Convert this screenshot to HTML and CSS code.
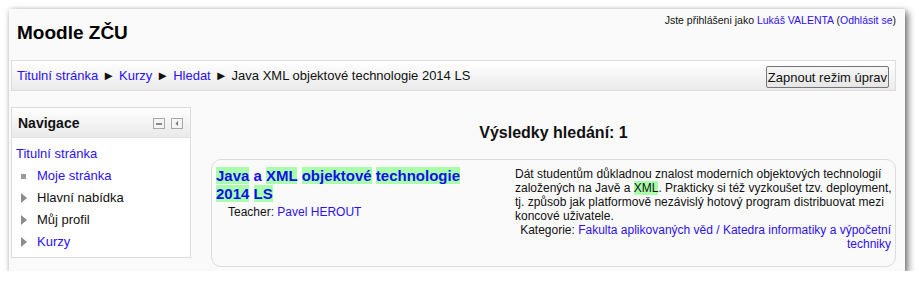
FILE: index.html
```html
<!DOCTYPE html>
<html lang="cs">
<head>
<meta charset="utf-8">
<title>Moodle ZČU</title>
<link rel="stylesheet" href="styles.css">
</head>
<body>
<div class="window">
  <div class="page">
    <div class="header">
      <h1 class="site-name">Moodle ZČU</h1>
      <div class="logininfo">Jste přihlášeni jako <a href="#">Lukáš VALENTA</a> (<a href="#">Odhlásit se</a>)</div>
    </div>
    <div class="navbar">
      <div class="breadcrumb">
        <a href="#">Titulní stránka</a><span class="sep">►</span><a href="#">Kurzy</a><span class="sep">►</span><a href="#">Hledat</a><span class="sep">►</span><span>Java XML objektové technologie 2014 LS</span>
      </div>
      <button class="edit-btn" type="button">Zapnout režim úprav</button>
    </div>
    <div class="content">
      <div class="block">
        <div class="block-header">
          <h2 class="block-title">Navigace</h2>
          <div class="block-icons">
            <svg width="12" height="11" viewBox="0 0 12 11"><rect x="0.5" y="0.5" width="11" height="10" fill="#f4f4f4" stroke="#a8a8a8"/><rect x="3" y="5" width="6" height="2" fill="#8a8a8a"/></svg>
            <svg width="12" height="11" viewBox="0 0 12 11"><rect x="0.5" y="0.5" width="11" height="10" fill="#f4f4f4" stroke="#a8a8a8"/><path d="M7 3 L4.5 5.5 L7 8 Z" fill="#7a7a7a"/></svg>
          </div>
        </div>
        <div class="block-content">
          <a class="nav-top" href="#">Titulní stránka</a>
          <ul class="nav-list">
            <li class="nav-item"><span class="bullet-square"></span><a href="#">Moje stránka</a></li>
            <li class="nav-item"><span class="bullet-tri"></span><span>Hlavní nabídka</span></li>
            <li class="nav-item"><span class="bullet-tri"></span><span>Můj profil</span></li>
            <li class="nav-item"><span class="bullet-tri"></span><a href="#">Kurzy</a></li>
          </ul>
        </div>
      </div>
      <div class="main">
        <h2 class="results">Výsledky hledání: 1</h2>
        <div class="coursebox">
          <div class="info">
            <h3 class="course-name"><a href="#"><span class="hl">Java</span> a <span class="hl">XML</span> <span class="hl">objektové</span> <span class="hl">technologie</span> <span class="hl">2014</span> <span class="hl">LS</span></a></h3>
            <div class="teacher">Teacher: <a href="#">Pavel HEROUT</a></div>
          </div>
          <div class="summary">
            <p class="summary-text">Dát studentům důkladnou znalost moderních objektových technologií<br>založených na Javě a <span class="hl">XML</span>. Prakticky si též vyzkoušet tzv. deployment,<br>tj. způsob jak platformově nezávislý hotový program distribuovat mezi<br>koncové uživatele.</p>
            <p class="category">Kategorie: <a href="#">Fakulta aplikovaných věd / Katedra informatiky a výpočetní<br>techniky</a></p>
          </div>
        </div>
      </div>
    </div>
  </div>
</div>
</body>
</html>
```

FILE: styles.css
```css
* { box-sizing: border-box; }
html, body { margin: 0; padding: 0; background: #ffffff; }
body { font-family: "Liberation Sans", Arial, sans-serif; font-size: 13px; color: #111; }
a { color: #2e10f0; text-decoration: none; }

.window {
  margin: 9px 0 0 9px;
  width: 896px;
  height: 262px;
  background: #fafafa;
  box-shadow: 3px 3px 7px rgba(0,0,0,0.55), 0 0 4px rgba(0,0,0,0.12);
  overflow: hidden;
}
.page { padding: 0 9px 0 2px; }

.header {
  height: 51px;
  display: flex;
  justify-content: space-between;
  align-items: flex-start;
}
.site-name {
  margin: 12px 0 0 6px;
  font-size: 19px;
  line-height: 24px;
  font-weight: bold;
  color: #000;
}
.logininfo {
  margin-top: 5px;
  font-size: 10.5px;
  line-height: 13px;
  color: #111;
}

.navbar {
  height: 31px;
  border: 1px solid #dcdcdc;
  background: linear-gradient(#ffffff, #ebebeb);
  display: flex;
  align-items: center;
  justify-content: space-between;
  padding: 0 6px 0 5px;
}
.breadcrumb { font-size: 13px; line-height: 16px; white-space: nowrap; }
.sep { margin: 0 4px; font-size: 13px; color: #111; }
.edit-btn {
  font-family: "Liberation Sans", Arial, sans-serif;
  font-size: 13px;
  height: 22px;
  padding: 0 1px;
  margin-top: 3px;
  border: 1px solid #767676;
  border-radius: 2px;
  background: linear-gradient(#f6f6f6, #e6e6e6);
  color: #111;
}

.content { display: flex; margin-top: 16px; }
.block {
  width: 180px;
  height: 151px;
  border: 1px solid #dcdcdc;
  background: #ffffff;
  flex-shrink: 0;
}
.block-header {
  height: 30px;
  background: linear-gradient(#ffffff, #e9e9e9);
  border-bottom: 1px solid #e2e2e2;
  display: flex;
  align-items: center;
  justify-content: space-between;
  padding: 0 7px 0 6px;
}
.block-title { margin: 0; font-size: 14px; font-weight: bold; color: #111; }
.block-icons { display: flex; gap: 6px; margin-top: 1px; }
.block-icons svg { display: block; }
.block-content { padding: 5px 0 0 4px; }
.nav-top { display: block; line-height: 22px; font-size: 13px; }
.nav-list { list-style: none; margin: 0; padding: 0; }
.nav-item { display: flex; align-items: center; height: 22px; line-height: 22px; }
.bullet-square { width: 5px; height: 5px; background: #9a9a9a; margin: 0 11px 0 5px; }
.bullet-tri {
  width: 0; height: 0;
  border-top: 5px solid transparent;
  border-bottom: 5px solid transparent;
  border-left: 6px solid #8c8c8c;
  margin: 0 10px 0 5px;
}

.main { margin-left: 20px; width: 685px; flex-shrink: 0; }
.results {
  margin: 17px 0 17px 0;
  text-align: center;
  font-size: 16px;
  line-height: 18px;
  font-weight: bold;
  color: #111;
}
.coursebox {
  height: 108px;
  border: 1px solid #dcdcdc;
  border-radius: 10px;
  display: flex;
  justify-content: space-between;
  padding: 7px 4px 0 4px;
}
.info { width: 270px; flex-shrink: 0; }
.course-name { margin: 0; font-size: 15px; line-height: 18px; font-weight: bold; }
.course-name a { color: #1010ee; }
.hl { background: #aaffaa; }
.teacher { font-size: 12px; line-height: 14px; margin-top: 2px; padding-left: 12px; }
.summary { width: 376px; flex-shrink: 0; font-size: 12px; line-height: 14px; padding-top: 0; white-space: nowrap; }
.summary-text { margin: 0; }
.category { margin: 0; text-align: right; }
```
